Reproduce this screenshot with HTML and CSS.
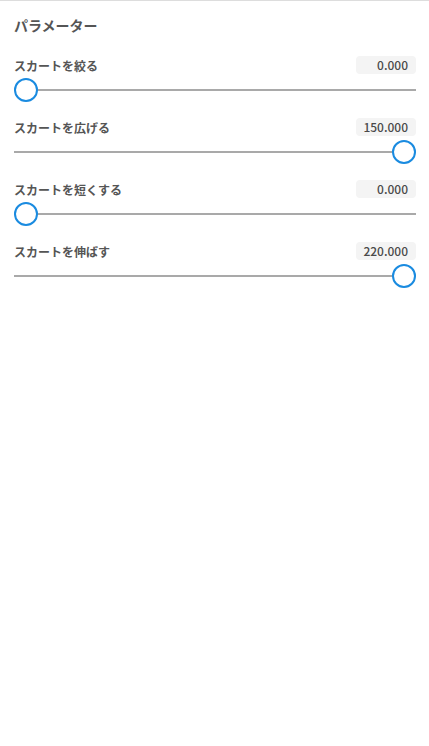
FILE: index.html
```html
<!DOCTYPE html>
<html lang="ja">
<head>
    <meta charset="UTF-8">
    <meta name="viewport" content="width=device-width, initial-scale=1.0">
    <title>パラメーター</title>
    <link rel="stylesheet" href="styles.css">
</head>
<body>
    <div class="panel">
        <h2 class="panel-title">パラメーター</h2>

        <div class="param">
            <div class="param-head">
                <span class="param-label">スカートを絞る</span>
                <span class="param-value">0.000</span>
            </div>
            <div class="slider">
                <div class="slider-track"></div>
                <div class="slider-thumb" style="left: 0%"></div>
            </div>
        </div>

        <div class="param">
            <div class="param-head">
                <span class="param-label">スカートを広げる</span>
                <span class="param-value">150.000</span>
            </div>
            <div class="slider">
                <div class="slider-track"></div>
                <div class="slider-thumb" style="left: 100%"></div>
            </div>
        </div>

        <div class="param">
            <div class="param-head">
                <span class="param-label">スカートを短くする</span>
                <span class="param-value">0.000</span>
            </div>
            <div class="slider">
                <div class="slider-track"></div>
                <div class="slider-thumb" style="left: 0%"></div>
            </div>
        </div>

        <div class="param">
            <div class="param-head">
                <span class="param-label">スカートを伸ばす</span>
                <span class="param-value">220.000</span>
            </div>
            <div class="slider">
                <div class="slider-track"></div>
                <div class="slider-thumb" style="left: 100%"></div>
            </div>
        </div>
    </div>
</body>
</html>
```

FILE: styles.css
```css
:root {
    --text: #555555;
    --accent: #1a8be0;
    --track: #a9a9a9;
    --value-bg: #f4f4f4;
}

* {
    margin: 0;
    padding: 0;
    box-sizing: border-box;
}

body {
    background: #ffffff;
    border-top: 1px solid #dddddd;
    font-family: "Noto Sans CJK JP", "Noto Sans", sans-serif;
    color: var(--text);
}

.panel {
    padding: 14px 13px 0 14px;
}

.panel-title {
    font-size: 14px;
    font-weight: 700;
    line-height: 20px;
    margin-bottom: 21px;
}

/* Parameter rows */
.param {
    margin-bottom: 11px;
}

.param-head {
    display: flex;
    justify-content: space-between;
    align-items: center;
    height: 17px;
}

.param-label {
    font-size: 12px;
    font-weight: 700;
    line-height: 17px;
    padding-top: 2px;
}

.param-value {
    width: 60px;
    height: 18px;
    background: var(--value-bg);
    border-radius: 4px;
    font-family: "Noto Sans CJK JP", "Noto Sans", sans-serif;
    font-size: 12px;
    font-weight: 500;
    line-height: 18px;
    text-align: right;
    padding-right: 8px;
    color: #4a4a4a;
}

/* Slider */
.slider {
    position: relative;
    height: 34px;
    margin: 0 12px;
}

.slider-track {
    position: absolute;
    left: -12px;
    right: -12px;
    top: 16px;
    height: 2px;
    background: var(--track);
}

.slider-thumb {
    position: absolute;
    top: 5px;
    width: 24px;
    height: 24px;
    margin-left: -12px;
    border: 2px solid var(--accent);
    border-radius: 50%;
    background: #ffffff;
}
```
